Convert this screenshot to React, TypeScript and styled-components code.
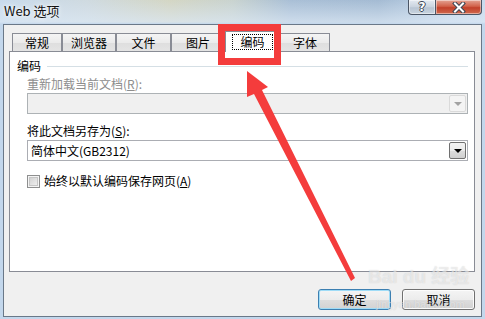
import React from "react";
import styled, { createGlobalStyle } from "styled-components";

const GlobalStyle = createGlobalStyle`
  html, body {
    margin: 0;
    padding: 0;
    width: 485px;
    height: 319px;
    overflow: hidden;
  }
  body {
    font-family: "Noto Sans CJK SC", "Noto Sans", "Liberation Sans", sans-serif;
    font-size: 12px;
    color: #000;
  }
`;

const tabs = [
  { label: "常规", width: 50 },
  { label: "浏览器", width: 54 },
  { label: "文件", width: 55 },
  { label: "图片", width: 54 },
  { label: "编码", width: 55, active: true },
  { label: "字体", width: 50 },
];

const Window = styled.div`
  position: relative;
  width: 485px;
  height: 319px;
  display: flex;
  flex-direction: column;
  background:
    linear-gradient(180deg, rgba(255, 255, 255, 0) 0, rgba(220, 232, 244, 0.7) 22px, #c3d7ec 24px),
    linear-gradient(90deg, #c8daec 0, #cfdae0 18%, #d4d6c4 35%, #c9d3cf 48%, #a9bfd6 60%, #a4bbd3 78%, #c2d5e9 92%, #c8daed 100%);
`;

const TitleBar = styled.div`
  height: 24px;
  display: flex;
  align-items: flex-start;
  padding-left: 4px;
`;

const Title = styled.div`
  margin-top: 2px;
  font-family: "Noto Sans CJK SC", "Noto Sans", sans-serif;
  font-size: 13px;
  line-height: 17px;
  color: #111;
  text-shadow: 0 0 6px rgba(255, 255, 255, 0.9), 0 0 3px rgba(255, 255, 255, 0.9);
`;

const CaptionButtons = styled.div`
  margin-left: auto;
  margin-right: 3px;
  display: flex;
`;

const CaptionButton = styled.div<{ $kind: "help" | "close" }>`
  width: ${(p) => (p.$kind === "close" ? 46 : 28)}px;
  height: 15px;
  box-sizing: border-box;
  border: 1px solid #4b5666;
  border-top: none;
  border-left-width: ${(p) => (p.$kind === "close" ? 0 : 1)}px;
  border-radius: ${(p) => (p.$kind === "close" ? "0 0 4px 0" : "0 0 0 4px")};
  display: flex;
  align-items: center;
  justify-content: center;
  background: ${(p) =>
    p.$kind === "close"
      ? "linear-gradient(180deg, #e4a494 0, #d2624a 45%, #c2402a 55%, #d06a4e 100%)"
      : "linear-gradient(180deg, #e4eaf1 0, #c9d3de 50%, #b8c5d3 55%, #c9d4df 100%)"};
  box-shadow: inset 0 0 0 1px rgba(255, 255, 255, 0.45);
`;

const HelpGlyph = styled.span`
  font-family: "DejaVu Sans", sans-serif;
  font-weight: bold;
  font-size: 12px;
  line-height: 12px;
  color: #fff;
  text-shadow: 1px 0 0 #3d4654, -1px 0 0 #3d4654, 0 1px 0 #3d4654, 0 -1px 0 #3d4654;
`;

const Client = styled.div`
  flex: 1;
  margin: 0 3px 2px 3px;
  border: 1px solid #6a7888;
  background: #f0f0f0;
  display: flex;
  flex-direction: column;
`;

const TabStrip = styled.div`
  height: 20px;
  margin-top: 6px;
  padding-left: 8px;
  display: flex;
  align-items: flex-end;
`;

const Tab = styled.div<{ $width: number; $active?: boolean }>`
  width: ${(p) => p.$width}px;
  height: ${(p) => (p.$active ? 21 : 18)}px;
  margin-bottom: ${(p) => (p.$active ? -1 : 0)}px;
  box-sizing: border-box;
  border: 1px solid #898c95;
  border-bottom: none;
  position: relative;
  z-index: ${(p) => (p.$active ? 2 : 0)};
  display: flex;
  align-items: center;
  justify-content: center;
  padding-top: ${(p) => (p.$active ? 0 : 1)}px;
  background: ${(p) => (p.$active ? "#fff" : "linear-gradient(180deg, #f4f4f4 0, #ebebeb 50%, #dedede 51%, #e4e4e4 100%)")};
  line-height: 14px;
`;

const FocusLabel = styled.span`
  outline: 1px dotted #000;
  padding: 0 7px;
  line-height: 14px;
`;

const Panel = styled.div`
  height: 221px;
  box-sizing: border-box;
  margin: 0 6px 0 5px;
  border: 1px solid #898c95;
  background: #fff;
  padding: 0 6px 0 7px;
  position: relative;
  z-index: 1;
`;

const GroupHeader = styled.div`
  margin-top: 6px;
  display: flex;
  align-items: center;
  gap: 6px;
  line-height: 16px;
`;

const Rule = styled.div`
  flex: 1;
  height: 1px;
  background: #d5dfe5;
`;

const Fields = styled.div`
  margin-left: 10px;
`;

const FieldLabel = styled.div<{ $disabled?: boolean }>`
  margin-top: ${(p) => (p.$disabled ? 3 : 10)}px;
  line-height: 14px;
  color: ${(p) => (p.$disabled ? "#8d8d8d" : "#000")};
`;

const Combo = styled.div<{ $disabled?: boolean }>`
  margin-top: 2px;
  height: 21px;
  box-sizing: border-box;
  border: 1px solid ${(p) => (p.$disabled ? "#adb2b5" : "#abadb3")};
  background: ${(p) => (p.$disabled ? "#f0f0f0" : "#fff")};
  display: flex;
  align-items: center;
  padding: 0 1px 0 3px;
`;

const ComboText = styled.div`
  flex: 1;
  line-height: 14px;
`;

const DropButton = styled.div<{ $disabled?: boolean }>`
  width: 17px;
  height: 17px;
  box-sizing: border-box;
  border: 1px solid ${(p) => (p.$disabled ? "#dadada" : "#707070")};
  border-radius: 2px;
  background: ${(p) =>
    p.$disabled ? "#f4f4f4" : "linear-gradient(180deg, #f2f2f2 0, #ebebeb 50%, #dddddd 51%, #cfcfcf 100%)"};
  display: flex;
  align-items: center;
  justify-content: center;
`;

const Caret = styled.div<{ $disabled?: boolean }>`
  width: 0;
  height: 0;
  border-left: 4px solid transparent;
  border-right: 4px solid transparent;
  border-top: 4px solid ${(p) => (p.$disabled ? "#a3a3a3" : "#000")};
  margin-top: 1px;
`;

const CheckRow = styled.div`
  margin-top: 13px;
  display: flex;
  align-items: center;
  gap: 4px;
  line-height: 14px;
`;

const CheckBox = styled.div`
  width: 13px;
  height: 13px;
  box-sizing: border-box;
  border: 1px solid #8e8f8f;
  box-shadow: inset 0 0 0 1px #f4f4f4, inset 0 0 0 2px #c6c6c6;
  background-image: linear-gradient(135deg, #cbcbcb 0, #f6f6f6 100%);
`;

const ButtonRow = styled.div`
  margin-top: 17px;
  padding-right: 6px;
  display: flex;
  justify-content: flex-end;
  gap: 11px;
`;

const DialogButton = styled.div<{ $default?: boolean }>`
  width: 73px;
  height: 21px;
  box-sizing: border-box;
  border: 1px solid ${(p) => (p.$default ? "#3c7fb1" : "#707070")};
  border-radius: 3px;
  display: flex;
  align-items: center;
  justify-content: center;
  line-height: 14px;
  background: linear-gradient(180deg, #f4f4f4 0, #ececec 50%, #dedede 51%, #d2d2d2 100%);
  box-shadow: inset 0 0 0 1px ${(p) => (p.$default ? "#9fdcf7" : "#fcfcfc")};
`;

const Overlay = styled.svg`
  position: absolute;
  left: 0;
  top: 0;
  width: 485px;
  height: 319px;
  pointer-events: none;
  z-index: 5;
`;

const Watermark = styled.div`
  position: absolute;
  left: 368px;
  top: 266px;
  z-index: 4;
  pointer-events: none;
  white-space: nowrap;
  color: rgba(255, 255, 255, 0.5);
  text-shadow: 0 0 1px rgba(120, 120, 120, 0.3);
  display: flex;
  flex-direction: column;
  align-items: flex-start;
`;

const MarkBig = styled.div`
  font-family: "Liberation Sans", "Noto Sans CJK SC", sans-serif;
  font-size: 19px;
  font-weight: bold;
  line-height: 22px;
`;

const MarkSmall = styled.div`
  font-family: "Liberation Sans", sans-serif;
  font-size: 11px;
  line-height: 12px;
  margin-left: 8px;
  margin-top: 10px;
`;

export default function App() {
  return (
    <>
      <GlobalStyle />
      <Window>
        <TitleBar>
          <Title>Web 选项</Title>
          <CaptionButtons>
            <CaptionButton $kind="help">
              <HelpGlyph>?</HelpGlyph>
            </CaptionButton>
            <CaptionButton $kind="close">
              <svg width="14" height="11" viewBox="0 0 14 11">
                <path d="M3 1.5 L11 9.5 M11 1.5 L3 9.5" stroke="#3d4654" strokeWidth="4" strokeLinecap="square" />
                <path d="M3 1.5 L11 9.5 M11 1.5 L3 9.5" stroke="#fff" strokeWidth="2" strokeLinecap="square" />
              </svg>
            </CaptionButton>
          </CaptionButtons>
        </TitleBar>

        <Client>
          <TabStrip>
            {tabs.map((t) => (
              <Tab key={t.label} $width={t.width} $active={t.active}>
                {t.active ? <FocusLabel>{t.label}</FocusLabel> : t.label}
              </Tab>
            ))}
          </TabStrip>

          <Panel>
            <GroupHeader>
              <span>编码</span>
              <Rule />
            </GroupHeader>
            <Fields>
              <FieldLabel $disabled>
                重新加载当前文档(<u>R</u>):
              </FieldLabel>
              <Combo $disabled>
                <ComboText />
                <DropButton $disabled>
                  <Caret $disabled />
                </DropButton>
              </Combo>
              <FieldLabel>
                将此文档另存为(<u>S</u>):
              </FieldLabel>
              <Combo>
                <ComboText>简体中文(GB2312)</ComboText>
                <DropButton>
                  <Caret />
                </DropButton>
              </Combo>
              <CheckRow>
                <CheckBox />
                <span>
                  始终以默认编码保存网页(<u>A</u>)
                </span>
              </CheckRow>
            </Fields>
          </Panel>

          <ButtonRow>
            <DialogButton $default>确定</DialogButton>
            <DialogButton>取消</DialogButton>
          </ButtonRow>
        </Client>

        <Watermark>
          <MarkBig>Bai du 经验</MarkBig>
          <MarkSmall>jingyan.baidu.com</MarkSmall>
        </Watermark>

        <Overlay viewBox="0 0 485 319">
          <rect x="221.5" y="27.5" width="56" height="34" fill="none" stroke="#f43c3c" strokeWidth="7" />
          <polygon
            points="247,71 268,87 262,90 355,278 351,281 254,94 247,97"
            fill="#f43c3c"
          />
        </Overlay>
      </Window>
    </>
  );
}
